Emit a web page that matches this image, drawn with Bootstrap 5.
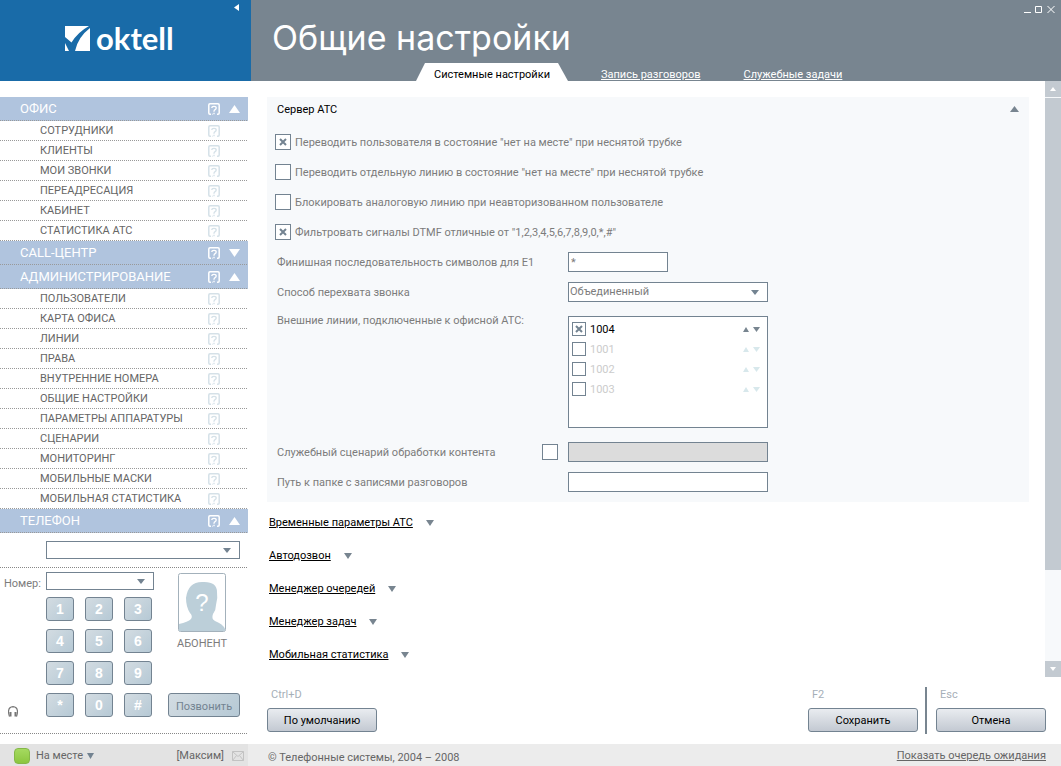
<!DOCTYPE html>
<html lang="ru">
<head>
<meta charset="utf-8">
<meta name="viewport" content="width=device-width, initial-scale=1">
<title>Oktell – Общие настройки</title>
<link href="https://cdn.jsdelivr.net/npm/bootstrap@5.3.0/dist/css/bootstrap.min.css" rel="stylesheet">
<style>
:root{--slate:#788590;--edge:#738391;--blue:#196ba8;--sky:#b0c4de;--pale:#c3cad1;}
body{font-family:Roboto,"Liberation Sans",sans-serif;font-size:11px;line-height:16px;color:#7c7c7c;background:#fff;}
svg{display:block;flex:none;}
a{color:inherit;}
a:hover{color:inherit;}
.plain{background:none;border:0;padding:0;color:inherit;line-height:16px;}
.side{width:251px;flex:none;}
.brand{height:81px;background:var(--blue);color:#fff;}
.brand-row{padding:22px 0 0 65px;gap:6px;}
.wordmark{font-family:Lato,sans-serif;font-weight:700;font-size:31px;line-height:32px;}
.collapse-btn{position:absolute;top:4px;right:12px;}
.menu{width:248px;margin-top:16px;}
.menu-head,.menu-item{background-image:repeating-linear-gradient(90deg,#999 0 1px,transparent 1px 2px);background-repeat:repeat-x;background-position:left bottom;background-size:100% 1px;}
.menu-head{height:24px;padding:0 8px 0 20px;background-color:var(--sky);color:#fff;font-size:13px;gap:9px;}
.menu-item{height:20px;padding:0 28px 0 40px;color:#666;}
.menu-item a{text-decoration:none;}
.menu-item svg{color:#d5e1e8;}
.dots{height:1px;width:247px;background:repeating-linear-gradient(90deg,#888 0 1px,transparent 1px 2px);}
.phone{width:248px;}
.field,.pick{border:1px solid var(--edge);border-radius:0;background-color:#fff;color:#7c7c7c;font-size:11px;line-height:16px;height:20px;padding:0 2px;min-width:0;}
.pick{appearance:none;background-repeat:no-repeat;background-position:right 8px center;background-image:url("data:image/svg+xml,%3Csvg xmlns='http://www.w3.org/2000/svg' width='8' height='5'%3E%3Cpath d='M0 0h8L4 5z' fill='%23738391'/%3E%3C/svg%3E");padding-left:1px;}
.field:disabled{background:#dcdcdc;}
.phone .pick{height:18px;}
.phone-line{padding:8px 8px 8px 46px;}
.phone-grid{display:grid;grid-template-columns:42px 108px 1fr;padding:4px 8px 16px 4px;}
.keys{display:grid;grid-template-columns:repeat(3,28px);gap:8px 11px;margin-top:7px;}
.key,.call-btn{border:1px solid var(--edge);border-radius:3px;background:linear-gradient(135deg,#d3dce2,#b6c9d5);height:24px;padding:0;}
.key{color:#fff;font:700 14px/20px "Liberation Sans",Arial,sans-serif;}
.call-btn{width:72px;color:#738391;padding-top:3px;}
.caller{width:76px;padding-top:1px;}
.state{height:22px;background:#ececec;color:#666;}
.state-side{width:248px;background:#e3e3e3;padding:2px 4px 0 14px;margin-right:3px;}
.lamp{width:16px;height:16px;margin-right:6px;border-radius:4px;background:linear-gradient(#a5da60,#8cc63f);border:1px solid #85b848;}
.state-main{padding:2px 15px 0 17px;}
.top{height:81px;background:var(--slate);color:#fff;}
.top h1{font-family:Inter,sans-serif;font-size:34px;line-height:44px;font-weight:400;margin:0;padding:16px 0 0 21px;}
.win{position:absolute;top:5px;right:6px;gap:4px;}
.tabs{padding-left:165px;height:18px;line-height:24px;}
.tab-on{width:152px;background:#fff;color:#000;clip-path:polygon(9px 0,calc(100% - 10px) 0,100% 100%,0 100%);height:18px;margin-right:33px;}
.tab-off{height:18px;margin-right:43px;}
.page-body{padding:16px 16px 0;}
.panel{background:#f7f9fb;padding:4px 10px 5px;}
.panel-head{height:26px;color:#000;padding-bottom:10px;}
.panel label,.panel-head span{padding-top:2px;}
.tick-row{height:30px;margin-left:-2px;gap:4px;}
.form-line{display:grid;grid-template-columns:281px 200px;column-gap:10px;height:30px;align-items:center;}
.form-line.tall{height:130px;align-items:start;padding-top:6px;}
.short{width:100px;}
.tick{appearance:none;width:16px;height:16px;margin:0;border:1px solid var(--edge);background:#fff center no-repeat;flex:none;}
.tick:checked{background-image:url("data:image/svg+xml,%3Csvg xmlns='http://www.w3.org/2000/svg' width='8' height='8'%3E%3Cpath d='M1 1l6 6M7 1l-6 6' stroke='%23738391' stroke-width='2'/%3E%3C/svg%3E");}
.list-box{height:112px;margin-top:3px;border:1px solid var(--edge);background:#fff;padding:2px 7px 0 3px;}
.list-line{height:20px;gap:4px;color:#ccc;}
.list-line .tick{width:14px;height:14px;}
.list-line svg{color:#d8e8ec;}
.list-line.on{color:#000;}
.list-line.on svg,.panel-head svg,.fold svg{color:var(--slate);}
.folds{padding-top:4px;}
.fold{height:33px;gap:13px;padding-left:2px;color:#000;}
.bar{width:16px;flex:none;background:#f7f9fb;color:#fff;}
.bar button{height:16px;background:var(--pale);color:#fff;}
.thumb{flex:472;background:var(--pale);margin-top:1px;}
.rest{flex:91;}
.actions{padding:10px 15px 10px 16px;}
.act{width:110px;height:24px;padding:2px 0 0;line-height:16px;color:#000;border:1px solid var(--edge);border-radius:3px;background:linear-gradient(#e9ecf0,#c3c9d2);margin-bottom:2px;}
.hint{color:#a6afb8;padding:0 4px;margin-bottom:5px;}
.split{width:2px;background:var(--slate);margin:0 9px 0 7px;height:47px;}
</style>
</head>
<body>
<svg width="0" height="0" class="position-absolute" aria-hidden="true">
  <symbol id="q" viewBox="0 0 12 12"><path d="M3 11.200H2Q.8 11.200.8 10V2Q.8.8 2 .8h8q1.200 0 1.200 1.200v8q0 1.200-1.200 1.200H9M4.500 11.200H5" fill="none" stroke="currentColor" stroke-width="1.500"/><path d="M3.800 5Q3.800 3.300 6 3.300T8.200 5q0 1-1.100 1.600T6 8.200v.5M6 9.700v1.500" fill="none" stroke="currentColor" stroke-width="1.300"/></symbol>
  <symbol id="up" viewBox="0 0 10 8" preserveAspectRatio="none"><path d="M5 0l5 8H0z" fill="currentColor"/></symbol>
  <symbol id="down" viewBox="0 0 10 8" preserveAspectRatio="none"><path d="M0 0h10L5 8z" fill="currentColor"/></symbol>
</svg>
<div class="d-flex flex-column min-vh-100">
<div class="d-flex flex-grow-1">
  <aside class="side d-flex flex-column">
    <div class="brand position-relative">
      <div class="brand-row d-flex align-items-center">
        <svg width="25" height="25" viewBox="0 0 25 25"><path fill="#fff" d="M0 0h24Q13 6 6.500 16.500L0 11zM25 2v23H10Q13 11 25 2zM0 17l4 8H0z"/></svg>
        <span class="wordmark">oktell</span>
      </div>
      <button class="plain collapse-btn" aria-label="Свернуть"><svg width="5" height="7" viewBox="0 0 5 7"><path d="M5 0v7L0 3.500z" fill="#fff"/></svg></button>
    </div>
    <nav class="menu" id="menu"></nav>
    <form class="phone flex-grow-1">
      <div class="phone-line d-flex"><select class="pick w-100" aria-label="Абонент"><option></option></select></div>
      <div class="dots"></div>
      <div class="phone-grid">
        <div class="d-flex flex-column justify-content-between">
          <label class="pt-1" for="num">Номер:</label>
          <svg class="ms-1" width="10" height="11" viewBox="0 0 10 11"><path d="M1.500 10.500Q.5 8 .5 5.500.7 1 5 .7q4.300.3 4.500 4.800 0 2.500-1 5" fill="none" stroke="#777" stroke-width="1.200"/><path d="M1.500 6h2v4.500h-2zM6.500 6h2v4.500h-2z" fill="#777"/></svg>
        </div>
        <div>
          <select class="pick w-100 d-block" id="num"><option></option></select>
          <div class="keys" id="keys"></div>
        </div>
        <div class="d-flex flex-column align-items-end">
          <div class="caller d-flex flex-column align-items-center">
            <svg width="48" height="59" viewBox="0 0 48 59"><rect x=".5" y=".5" width="47" height="58" rx="2" fill="#fff" stroke="#a3b1bb"/><path fill="#bccfd9" d="M1 58v-7q9-2 12-5 2-3-1-6-4-6-4-15Q10 9 24 9q15-1 15 10 1 6-1 13 0 5-3 9-2 5 2 7 8 3 10 8v2z"/><text x="24" y="38" text-anchor="middle" font-family="Liberation Sans" font-size="24" fill="#fff">?</text></svg>
            <span class="mt-1">АБОНЕНТ</span>
          </div>
          <button type="button" class="call-btn mt-auto">Позвонить</button>
        </div>
      </div>
      <div class="dots"></div>
    </form>
  </aside>
  <main class="flex-grow-1 d-flex flex-column">
    <header class="top position-relative d-flex flex-column justify-content-between">
      <h1>Общие настройки</h1>
      <div class="win d-flex">
        <button class="plain" aria-label="Свернуть окно"><svg width="8" height="9" viewBox="0 0 8 9"><path d="M1 7.500h7" stroke="#fff"/></svg></button>
        <button class="plain" aria-label="Развернуть"><svg width="8" height="9" viewBox="0 0 8 9"><path d="M.5 1.500h6v6h-6z" fill="none" stroke="#fff"/></svg></button>
        <button class="plain" aria-label="Закрыть"><svg width="8" height="9" viewBox="0 0 8 9"><path d="M.5 1l7 7M7.500 1l-7 7" stroke="#fff"/></svg></button>
      </div>
      <nav class="tabs d-flex">
        <a href="#" class="tab-on text-center text-decoration-none">Системные настройки</a>
        <a href="#" class="tab-off">Запись разговоров</a>
        <a href="#" class="tab-off">Служебные задачи</a>
      </nav>
    </header>
    <div class="d-flex flex-grow-1">
      <div class="page-body flex-grow-1">
        <section class="panel">
          <div class="panel-head d-flex align-items-center justify-content-between"><span>Сервер АТС</span><button class="plain" aria-label="Свернуть раздел"><svg width="9" height="6"><use href="#up"/></svg></button></div>
          <div class="tick-row d-flex align-items-center"><input type="checkbox" class="tick" id="c1" checked><label for="c1">Переводить пользователя в состояние "нет на месте" при неснятой трубке</label></div>
          <div class="tick-row d-flex align-items-center"><input type="checkbox" class="tick" id="c2"><label for="c2">Переводить отдельную линию в состояние "нет на месте" при неснятой трубке</label></div>
          <div class="tick-row d-flex align-items-center"><input type="checkbox" class="tick" id="c3"><label for="c3">Блокировать аналоговую линию при неавторизованном пользователе</label></div>
          <div class="tick-row d-flex align-items-center"><input type="checkbox" class="tick" id="c4" checked><label for="c4">Фильтровать сигналы DTMF отличные от "1,2,3,4,5,6,7,8,9,0,*,#"</label></div>
          <div class="form-line"><label for="f1">Финишная последовательность символов для E1</label><input class="field short" id="f1" value="*"></div>
          <div class="form-line"><label for="f2">Способ перехвата звонка</label><select class="pick" id="f2"><option>Объединенный</option></select></div>
          <div class="form-line tall"><span>Внешние линии, подключенные к офисной АТС:</span><div class="list-box" id="lines"></div></div>
          <div class="form-line"><span class="d-flex justify-content-between align-items-center"><label for="f3">Служебный сценарий обработки контента</label><input type="checkbox" class="tick" id="f3"></span><input class="field" aria-label="Сценарий" disabled></div>
          <div class="form-line"><label for="f4">Путь к папке с записями разговоров</label><input class="field" id="f4"></div>
        </section>
        <div class="folds" id="folds"></div>
      </div>
      <div class="bar d-flex flex-column">
        <button class="plain d-flex align-items-center justify-content-center" aria-label="Вверх"><svg width="6" height="4"><use href="#up"/></svg></button>
        <div class="thumb"></div><div class="rest"></div>
        <button class="plain d-flex align-items-center justify-content-center" aria-label="Вниз"><svg width="6" height="4"><use href="#down"/></svg></button>
      </div>
    </div>
    <div class="actions d-flex">
      <div class="me-auto d-flex flex-column justify-content-end"><span class="hint">Ctrl+D</span><button class="act">По умолчанию</button></div>
      <div class="d-flex flex-column justify-content-end"><span class="hint">F2</span><button class="act">Сохранить</button></div>
      <div class="split"></div>
      <div class="d-flex flex-column justify-content-end"><span class="hint">Esc</span><button class="act">Отмена</button></div>
    </div>
  </main>
</div>
<footer class="state d-flex">
  <div class="state-side d-flex align-items-center">
    <span class="lamp"></span><button class="plain d-flex align-items-center gap-1 me-auto">На месте <svg width="7" height="6" color="#738391"><use href="#down"/></svg></button>
    <span class="me-2">[Максим]</span>
    <svg width="12" height="10" viewBox="0 0 12 10" fill="none" stroke="#c2c2c2"><path d="M.5.5h11v9H.5zM.5.5L6 5.500l5.500-5M.5 9.500l4-5M11.500 9.500l-4-5"/></svg>
  </div>
  <div class="state-main flex-grow-1 d-flex align-items-center justify-content-between"><span class="pt-1">© Телефонные системы, 2004 – 2008</span><a href="#">Показать очередь ожидания</a></div>
</footer>
</div>
<script>
const menu=[
 ["ОФИС","up",["СОТРУДНИКИ","КЛИЕНТЫ","МОИ ЗВОНКИ","ПЕРЕАДРЕСАЦИЯ","КАБИНЕТ","СТАТИСТИКА АТС"]],
 ["CALL-ЦЕНТР","down",[]],
 ["АДМИНИСТРИРОВАНИЕ","up",["ПОЛЬЗОВАТЕЛИ","КАРТА ОФИСА","ЛИНИИ","ПРАВА","ВНУТРЕННИЕ НОМЕРА","ОБЩИЕ НАСТРОЙКИ","ПАРАМЕТРЫ АППАРАТУРЫ","СЦЕНАРИИ","МОНИТОРИНГ","МОБИЛЬНЫЕ МАСКИ","МОБИЛЬНАЯ СТАТИСТИКА"]],
 ["ТЕЛЕФОН","up",[]]];
const q='<svg width="12" height="12"><use href="#q"/></svg>';
document.getElementById("menu").innerHTML=menu.map(([t,d,items])=>
 `<div class="menu-head d-flex align-items-center"><span class="me-auto">${t}</span>${q}<button class="plain" aria-label="${t}"><svg width="11" height="8"><use href="#${d}"/></svg></button></div>`+
 items.map(i=>`<div class="menu-item d-flex align-items-center justify-content-between"><a href="#">${i}</a>${q}</div>`).join("")).join("");
document.getElementById("keys").innerHTML=[..."123456789*0#"].map(k=>`<button type="button" class="key">${k}</button>`).join("");
document.getElementById("lines").innerHTML=["1004","1001","1002","1003"].map((n,i)=>
 `<div class="list-line d-flex align-items-center ${i?"":"on"}"><input type="checkbox" class="tick" id="l${n}" ${i?"":"checked"}><label class="me-auto" for="l${n}">${n}</label><svg width="6" height="5"><use href="#up"/></svg><svg width="7" height="5"><use href="#down"/></svg></div>`).join("");
document.getElementById("folds").innerHTML=["Временные параметры АТС","Автодозвон","Менеджер очередей","Менеджер задач","Мобильная статистика"].map(t=>
 `<div class="fold d-flex align-items-center"><a href="#">${t}</a><svg width="8" height="6"><use href="#down"/></svg></div>`).join("");
</script>
<script src="https://cdn.jsdelivr.net/npm/bootstrap@5.3.0/dist/js/bootstrap.bundle.min.js"></script>
</body>
</html>
